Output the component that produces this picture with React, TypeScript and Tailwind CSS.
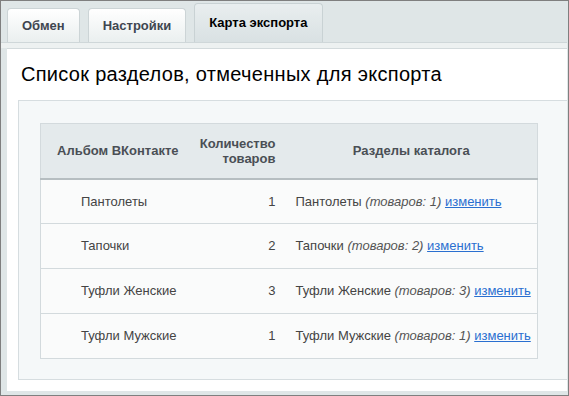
import React from "react";

const rows = [
  { album: "Пантолеты", count: 1, section: "Пантолеты", goods: 1 },
  { album: "Тапочки", count: 2, section: "Тапочки", goods: 2 },
  { album: "Туфли Женские", count: 3, section: "Туфли Женские", goods: 3 },
  { album: "Туфли Мужские", count: 1, section: "Туфли Мужские", goods: 1 },
];

const Tab = ({ label, active }: { label: string; active?: boolean }) =>
  active ? (
    <div className="h-[39px] pl-[14px] pr-[15px] flex items-center rounded-t-[4px] border border-b-0 border-[#c9d2d4] bg-gradient-to-b from-[#e9eeef] to-[#d9e1e3] text-[13px] font-bold text-black">
      {label}
    </div>
  ) : (
    <div className="h-[34px] px-[14px] flex items-center rounded-t-[4px] border border-b-0 border-[#ccd4d6] bg-gradient-to-b from-[#ffffff] to-[#eaefef] text-[13px] font-bold text-[#3f4650]">
      {label}
    </div>
  );

export default function App() {
  return (
    <div className="w-[569px] h-[396px] border border-[#7f7f7f] bg-[#dfe6e7] flex flex-col font-['Liberation_Sans',Arial,sans-serif]">
      {/* tabs */}
      <div className="flex items-end gap-[8px] pl-[6px] h-[41px] shrink-0">
        <Tab label="Обмен" />
        <Tab label="Настройки" />
        <Tab label="Карта экспорта" active />
      </div>
      <div className="h-[6px] shrink-0 border-t border-[#cfd7d9] bg-[#edf1f1] mr-px" />

      {/* content */}
      <div className="flex-1 ml-[6px] mr-px mb-[4px] bg-white border-t border-[#d3dadc] flex flex-col">
        <div className="h-[51px] pl-[14px] pt-[14px] text-[20px] leading-[23px] tracking-[0.3px] text-black shrink-0">
          Список разделов, отмеченных для экспорта
        </div>
        <div className="ml-[11px] bg-[#f5f8f9] border-t border-l border-b border-[#d6dde0] pt-[22px] pl-[21px] pr-[28px] pb-[20px]">
          <table className="w-[498px] border border-[#d3dadd] border-collapse text-[13px] text-[#444]">
            <thead>
              <tr className="h-[55px] bg-[#e4eaec] border-b-2 border-[#b6bec1] text-[#4a4f55] font-bold">
                <th className="w-[154px] text-center font-bold">Альбом ВКонтакте</th>
                <th className="w-[91px] text-right pr-[10px] font-bold leading-[15px]">
                  Количество
                  <br />
                  товаров
                </th>
                <th className="text-center font-bold">Разделы каталога</th>
              </tr>
            </thead>
            <tbody>
              {rows.map((r) => (
                <tr key={r.album} className="h-[45px] bg-[#fafbfb] border-b border-[#d3dadd]">
                  <td className="pl-[40px]">{r.album}</td>
                  <td className="text-right pr-[10px]">{r.count}</td>
                  <td className="pl-[10px]">
                    {r.section}{" "}
                    <span className="italic text-[#555]">(товаров: {r.goods})</span>{" "}
                    <a href="#" className="underline text-[#2a6fd0]">
                      изменить
                    </a>
                  </td>
                </tr>
              ))}
            </tbody>
          </table>
        </div>
      </div>
    </div>
  );
}
